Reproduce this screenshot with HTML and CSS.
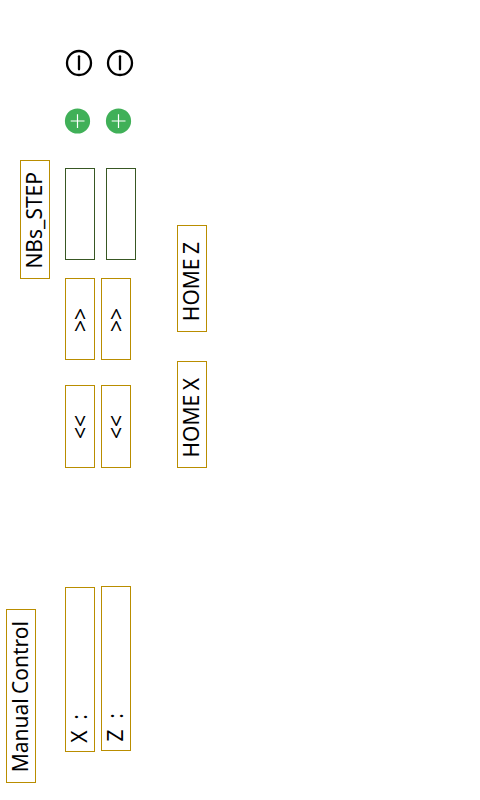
FILE: index.html
```html
<!DOCTYPE html>
<html lang="en">
<head>
<meta charset="utf-8">
<title>Manual Control</title>
<link rel="stylesheet" href="styles.css">
</head>
<body>
<main class="panel">
  <section class="column titles">
    <div class="box step-title"><span class="label">NBs_STEP</span></div>
    <div class="box main-title"><span class="label">Manual Control</span></div>
  </section>
  <section class="column axis-x">
    <svg class="power" viewBox="0 0 28 28"><circle cx="14" cy="14" r="12"/><path d="M14 7.3V20.3"/></svg>
    <svg class="plus" viewBox="0 0 26 26"><circle cx="12.5" cy="13" r="12.6"/><path d="M12.5 6.2V20M5.7 13H19.5"/></svg>
    <div class="box field"></div>
    <div class="box forward"><span class="label">&gt;&gt;</span></div>
    <div class="box back"><span class="label">&lt;&lt;</span></div>
    <div class="box position"><span class="label">X  :</span></div>
  </section>
  <section class="column axis-z">
    <svg class="power" viewBox="0 0 28 28"><circle cx="14" cy="14" r="12"/><path d="M14 7.3V20.3"/></svg>
    <svg class="plus" viewBox="0 0 26 26"><circle cx="12.5" cy="13" r="12.6"/><path d="M12.5 6.2V20M5.7 13H19.5"/></svg>
    <div class="box field"></div>
    <div class="box forward"><span class="label">&gt;&gt;</span></div>
    <div class="box back"><span class="label">&lt;&lt;</span></div>
    <div class="box position"><span class="label">Z  :</span></div>
  </section>
  <section class="column homes">
    <div class="box home"><span class="label">HOME Z</span></div>
    <div class="box home"><span class="label">HOME X</span></div>
  </section>
</main>
</body>
</html>
```
FILE: styles.css
```css
* { box-sizing: border-box; }
body { margin: 0; background: #fff; color: #000; font-family: "Noto Sans", sans-serif; }
.panel { display: flex; align-items: flex-start; width: 480px; height: 800px; padding-left: 6px; overflow: hidden; }
.column { display: flex; flex-direction: column; align-items: flex-start; flex: none; }
.titles { width: 44px; margin-right: 15px; padding-top: 160px; }
.axis-x { width: 30px; margin-right: 6px; padding-top: 49px; }
.axis-z { width: 35px; margin-right: 41px; padding-top: 49px; }
.homes { width: 30px; padding-top: 225px; gap: 29px; }
.box { display: flex; align-items: center; justify-content: center; flex: none; width: 30px; border: 1px solid #b98d00; }
.label { flex: none; writing-mode: vertical-rl; transform: rotate(180deg); font-size: 21px; line-height: 28px; white-space: pre; }
.step-title, .main-title, .position, .home { padding-right: 2px; }
.step-title { height: 119px; align-self: flex-end; padding-top: 1px; }
.main-title { height: 174px; margin-top: 330px; padding-top: 2px; }
.main-title .label { word-spacing: -1px; }
.power { width: 28px; height: 28px; flex: none; fill: none; stroke: #000; stroke-width: 2.3; stroke-linecap: round; }
.plus { width: 26px; height: 26px; flex: none; margin: 31px 0 34px 0; overflow: visible; stroke: #fff; stroke-width: 1.2; }
.plus circle { fill: #40b058; stroke: none; }
.field { height: 92px; border-color: #385723; }
.forward { height: 82px; margin-top: 18px; padding-top: 2px; }
.back { height: 83px; margin-top: 25px; padding-top: 2px; }
.position { height: 165px; margin-top: 119px; align-items: flex-end; padding-bottom: 8px; }
.axis-z .power, .axis-z .field { margin-left: 5px; }
.axis-z .plus { margin-left: 5px; }
.axis-z .position { margin-top: 118px; }
.home { height: 107px; padding-top: 7px; }
.home .label { word-spacing: -1px; }
```
